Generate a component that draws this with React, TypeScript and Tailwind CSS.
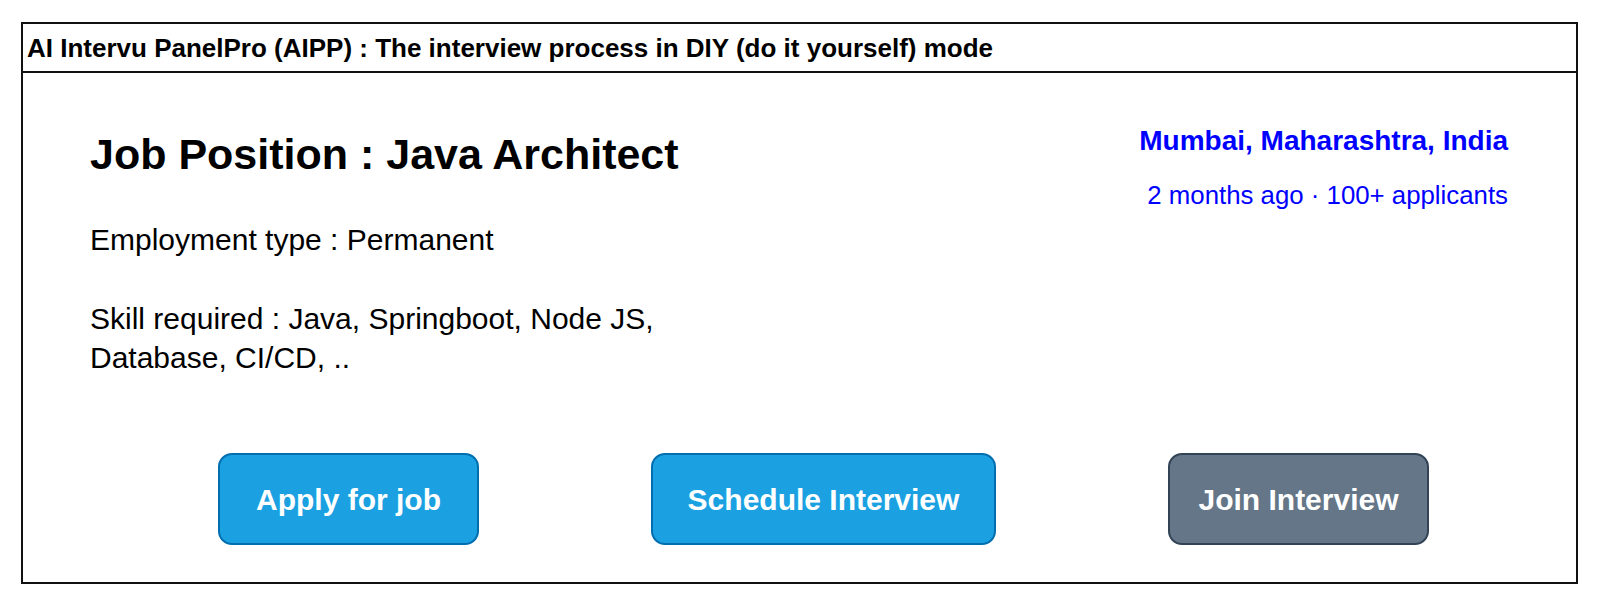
export default function App() {
  const font = { fontFamily: '"Liberation Sans", Arial, Helvetica, sans-serif' };

  return (
    <div className="min-h-[607px] w-[1600px] bg-white pt-[22px] pl-[21px] text-black" style={font}>
      <div className="flex h-[562px] w-[1557px] flex-col border-2 border-[#111]">
        {/* title bar */}
        <div className="flex h-[49px] shrink-0 items-center border-b-2 border-[#111] px-[4px]">
          <span className="text-[26px] font-bold leading-none">
            AI Intervu PanelPro (AIPP) : The interview process in DIY (do it yourself) mode
          </span>
        </div>

        {/* job details */}
        <div className="flex justify-between pl-[67px] pr-[68px]">
          <div className="pt-[55px]">
            <h1 className="text-[43px] font-bold leading-[52px]">Job Position : Java Architect</h1>
            <p className="mt-[42px] text-[30px] leading-[36px]">Employment type : Permanent</p>
            <p className="mt-[41px] text-[30px] leading-[39px]">
              Skill required : Java, Springboot, Node JS,
              <br />
              Database, CI/CD, ..
            </p>
          </div>
          <div className="flex flex-col items-end pt-[51px] text-[#0000ff]">
            <div className="text-[28px] font-bold leading-[34px]">Mumbai, Maharashtra, India</div>
            <div className="mt-[22px] text-[25.8px] leading-[31px]">2 months ago · 100+ applicants</div>
          </div>
        </div>

        {/* actions */}
        <div className="mt-[76px] flex gap-[172px] pl-[195px]">
          <button className="flex h-[92px] w-[261px] items-center justify-center rounded-[14px] border-2 border-[#006eaf] bg-[#1ba1e2] text-[30px] font-bold text-white">
            Apply for job
          </button>
          <button className="flex h-[92px] w-[345px] items-center justify-center rounded-[14px] border-2 border-[#006eaf] bg-[#1ba1e2] text-[30px] font-bold text-white">
            Schedule Interview
          </button>
          <button className="flex h-[92px] w-[261px] items-center justify-center rounded-[14px] border-2 border-[#314354] bg-[#647687] text-[30px] font-bold text-white">
            Join Interview
          </button>
        </div>
      </div>
    </div>
  );
}
